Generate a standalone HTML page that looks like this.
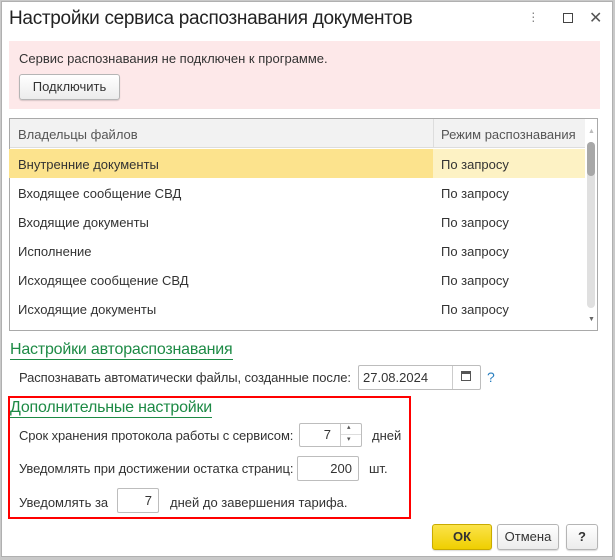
<!DOCTYPE html>
<html><head><meta charset="utf-8"><style>
*{margin:0;padding:0;box-sizing:border-box}
body{width:615px;height:560px;background:#c9c9c9;font-family:"Liberation Sans",Arial,sans-serif;font-size:13px;color:#333;position:relative;overflow:hidden}
.win{position:absolute;left:1px;top:1px;width:612px;height:556px;background:#fff;border:1px solid #b0b0b0}
.a{position:absolute;white-space:nowrap}
.inp{position:absolute;background:#fff;border:1px solid #bdbdbd;border-radius:2px;text-align:right;padding-right:6px;font-size:13px;color:#333}
.btn{position:absolute;border:1px solid #b5b5b5;border-radius:3px;background:linear-gradient(#fff,#ececec);text-align:center;font-size:13px;color:#333;box-shadow:0 1px 1px rgba(0,0,0,.15)}
.row{position:absolute;left:9px;width:576px;height:29px}
.row span{position:absolute;top:8px}
</style></head><body>
<div class="win"></div>
<div class="a" style="left:9px;top:8px;font-size:19px;color:#222;letter-spacing:-0.3px">Настройки сервиса распознавания документов</div>
<div class="a" style="left:531px;top:10px;font-size:14px;color:#888;line-height:4px">·<br>·<br>·</div>
<div class="a" style="left:563px;top:13px;width:10px;height:10px;border:1px solid #444"></div>
<div class="a" style="left:589px;top:8px;font-size:16px;color:#555">✕</div>

<div class="a" style="left:9px;top:41px;width:591px;height:68px;background:#fde8e9"></div>
<div class="a" style="left:19px;top:51px">Сервис распознавания не подключен к программе.</div>
<div class="btn" style="left:19px;top:74px;width:101px;height:26px;line-height:24px">Подключить</div>

<div class="a" style="left:9px;top:118px;width:589px;height:213px;border:1px solid #a9a9a9"></div>
<div class="a" style="left:10px;top:119px;width:575px;height:29px;background:#f2f2f2;border-bottom:1px solid #ddd"></div>
<div class="a" style="left:433px;top:119px;width:1px;height:29px;background:#ddd"></div>
<div class="a" style="left:18px;top:127px;color:#555">Владельцы файлов</div>
<div class="a" style="left:441px;top:127px;color:#555">Режим распознавания</div>
<div class="row" style="top:149px;background:#fce38d"><div class="a" style="left:424px;top:0;width:152px;height:29px;background:#fdf2c4"></div></div>
<div class="row" style="top:149px"><span style="left:9px">Внутренние документы</span><span style="left:432px">По запросу</span></div>
<div class="row" style="top:178px"><span style="left:9px">Входящее сообщение СВД</span><span style="left:432px">По запросу</span></div>
<div class="row" style="top:207px"><span style="left:9px">Входящие документы</span><span style="left:432px">По запросу</span></div>
<div class="row" style="top:236px"><span style="left:9px">Исполнение</span><span style="left:432px">По запросу</span></div>
<div class="row" style="top:265px"><span style="left:9px">Исходящее сообщение СВД</span><span style="left:432px">По запросу</span></div>
<div class="row" style="top:294px"><span style="left:9px">Исходящие документы</span><span style="left:432px">По запросу</span></div>
<div class="a" style="left:587px;top:142px;width:8px;height:166px;background:#e0e0e0;border-radius:4px"></div>
<div class="a" style="left:587px;top:142px;width:8px;height:34px;background:#a8a8a8;border-radius:4px"></div>
<div class="a" style="left:588px;top:128px;font-size:7px;color:#bbb">▲</div>
<div class="a" style="left:588px;top:316px;font-size:7px;color:#666">▼</div>

<div class="a" style="left:10px;top:341px;font-size:16px;color:#1d8a45;border-bottom:1px solid #1d8a45;line-height:18px;letter-spacing:-0.2px">Настройки автораспознавания</div>
<div class="a" style="left:19px;top:370px;letter-spacing:-0.1px">Распознавать автоматически файлы, созданные после:</div>
<div class="inp" style="left:358px;top:365px;width:123px;height:25px;text-align:left;padding-left:4px;line-height:23px">27.08.2024</div>
<div class="a" style="left:452px;top:366px;width:1px;height:23px;background:#ccc"></div>
<div class="a" style="left:461px;top:371px;width:10px;height:10px;border:1px solid #555;border-top-width:3px"></div>
<div class="a" style="left:487px;top:369px;color:#2a7fc0;font-size:14px">?</div>

<div class="a" style="left:8px;top:396px;width:403px;height:123px;border:2px solid #ff0000"></div>
<div class="a" style="left:10px;top:399px;font-size:16px;color:#1d8a45;border-bottom:1px solid #1d8a45;line-height:18px;letter-spacing:-0.2px">Дополнительные настройки</div>
<div class="a" style="left:19px;top:428px;letter-spacing:-0.1px">Срок хранения протокола работы с сервисом:</div>
<div class="inp" style="left:299px;top:423px;width:63px;height:24px;line-height:22px;padding-right:30px">7</div>
<div class="a" style="left:340px;top:424px;width:1px;height:22px;background:#ccc"></div>
<div class="a" style="left:341px;top:434px;width:20px;height:1px;background:#ddd"></div>
<div class="a" style="left:347px;top:423px;font-size:7px;color:#555">▴</div>
<div class="a" style="left:347px;top:435px;font-size:7px;color:#555">▾</div>
<div class="a" style="left:372px;top:428px">дней</div>
<div class="a" style="left:19px;top:461px;letter-spacing:-0.1px">Уведомлять при достижении остатка страниц:</div>
<div class="inp" style="left:297px;top:456px;width:62px;height:25px;line-height:23px">200</div>
<div class="a" style="left:369px;top:461px">шт.</div>
<div class="a" style="left:19px;top:495px">Уведомлять за</div>
<div class="inp" style="left:117px;top:488px;width:42px;height:25px;line-height:23px">7</div>
<div class="a" style="left:170px;top:495px">дней до завершения тарифа.</div>

<div class="btn" style="left:432px;top:524px;width:60px;height:26px;line-height:24px;background:linear-gradient(#fbe34a,#efcf00);border-color:#c9ab00;font-weight:bold;color:#333">ОК</div>
<div class="btn" style="left:497px;top:524px;width:62px;height:26px;line-height:24px">Отмена</div>
<div class="btn" style="left:566px;top:524px;width:32px;height:26px;line-height:24px;font-weight:bold">?</div>
</body></html>
